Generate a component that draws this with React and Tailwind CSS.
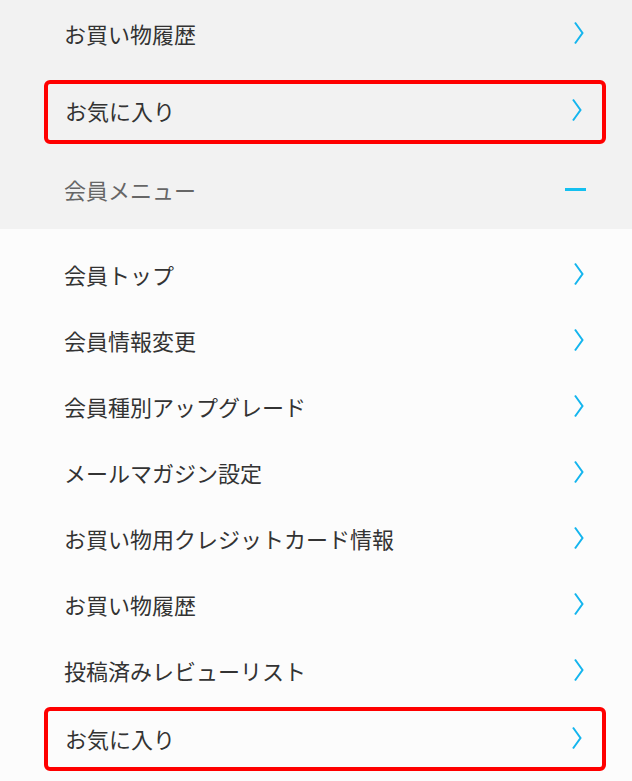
import React from "react";

const font = { fontFamily: '"Noto Sans CJK JP", "Noto Sans", sans-serif' };

const Chevron = () => (
  <svg width="12" height="24" viewBox="0 0 12 24" className="shrink-0">
    <path d="M2 1.5 L9.5 12 L2 22.5" fill="none" stroke="#14b5ee" strokeWidth="2" />
  </svg>
);

const Row = ({ label }) => (
  <div className="flex items-center justify-between h-[66px] pb-[2px] pl-[64px] pr-[47px]">
    <span className="text-[22px] text-[#333333] leading-none">{label}</span>
    <Chevron />
  </div>
);

const HighlightRow = ({ label }) => (
  <div className="ml-[44px] mr-[26px] h-[64px] border-4 border-[#ff0000] rounded-[6px] flex items-center justify-between pb-[3px] pl-[17px] pr-[19px]">
    <span className="text-[22px] text-[#333333] leading-none">{label}</span>
    <Chevron />
  </div>
);

const memberItems = [
  "会員トップ",
  "会員情報変更",
  "会員種別アップグレード",
  "メールマガジン設定",
  "お買い物用クレジットカード情報",
  "お買い物履歴",
  "投稿済みレビューリスト",
];

export default function App() {
  return (
    <div className="w-[632px] h-[781px] overflow-hidden bg-[#fcfcfc]" style={font}>
      {/* upper gray part */}
      <div className="bg-[#f2f2f2] h-[229px] flex flex-col">
        <div className="flex items-center justify-between h-[68px] pb-[2px] pl-[64px] pr-[47px]">
          <span className="text-[22px] text-[#333333] leading-none">お買い物履歴</span>
          <Chevron />
        </div>
        <div className="mt-[12px]">
          <HighlightRow label="お気に入り" />
        </div>
        <div className="flex items-center justify-between h-[78px] mt-[8px] pb-[2px] pl-[64px] pr-[46px]">
          <span className="text-[22px] text-[#666666] leading-none">会員メニュー</span>
          <div className="w-[21px] h-[3px] bg-[#14c0f0]" />
        </div>
      </div>

      {/* member menu */}
      <div className="pt-[13px]">
        {memberItems.map((item) => (
          <Row key={item} label={item} />
        ))}
        <div className="mt-[3px]">
          <HighlightRow label="お気に入り" />
        </div>
      </div>
    </div>
  );
}
